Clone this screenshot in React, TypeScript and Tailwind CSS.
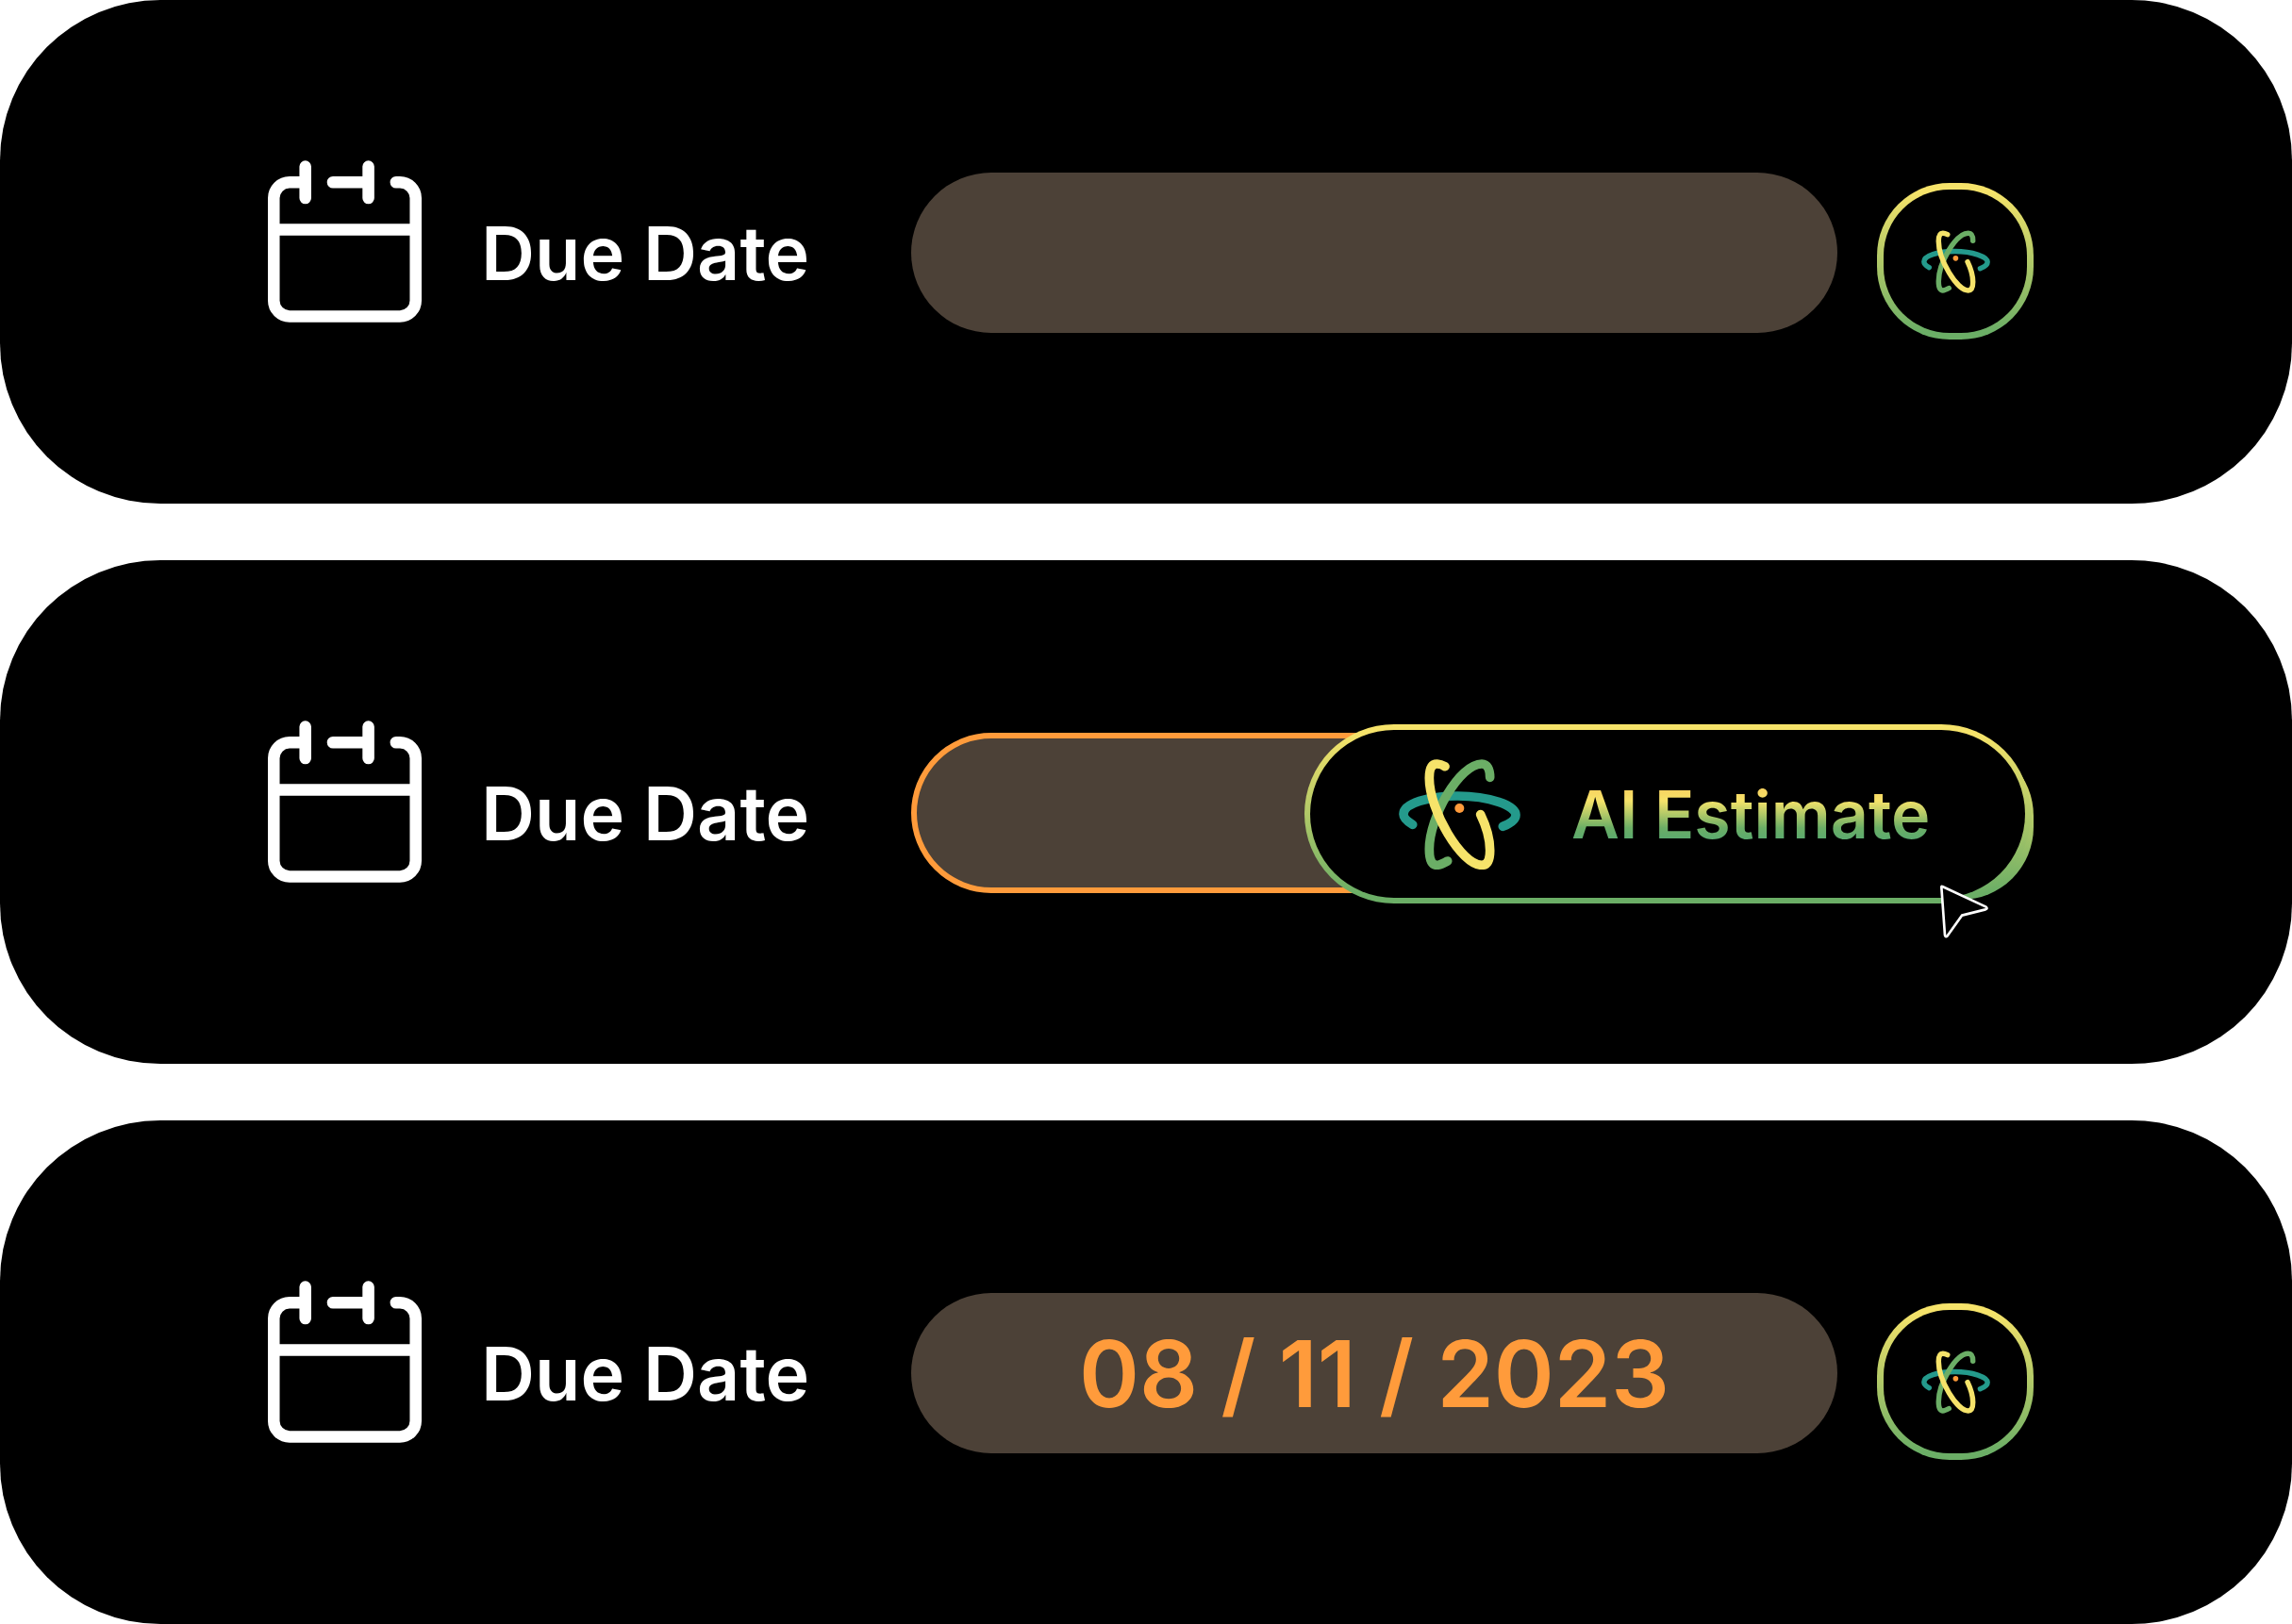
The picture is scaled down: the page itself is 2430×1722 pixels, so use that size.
import { useState } from "react";

function CalendarIcon() {
  return (
    <svg
      viewBox="2.25 1.25 19.5 20.5"
      className="mb-6 h-[172px] w-[163px] shrink-0"
      fill="none"
      stroke="white"
      strokeWidth="1.5"
      strokeLinecap="round"
      aria-hidden="true"
    >
      <path d="M7 4H5a2 2 0 0 0-2 2v13a2 2 0 0 0 2 2h14a2 2 0 0 0 2-2V6a2 2 0 0 0-2-2h-.5" />
      <path d="M10.5 4H15M7 2v4M15 2v4M3 10h18" />
    </svg>
  );
}

function AtomIcon({ className }: { className: string }) {
  return (
    <svg
      viewBox="71 72 387 351"
      className={className}
      fill="none"
      strokeWidth="29"
      strokeLinecap="round"
      aria-hidden="true"
    >
      <path
        stroke="#249a8c"
        d="M115 280C98 270 86 260 86 247C86 213 165 189 258 189C360 189 443 220 443 249C443 264 428 276 402 286"
      />
      <path
        stroke="#6bae66"
        d="M226 396C214 403 203 409 192 409C175 409 168 390 168 358C168 255 265 87 335 87C353 87 361 105 361 130"
      />
      <path
        stroke="#f6e36a"
        d="M218 95C209 90 200 87 192 87C175 87 168 103 168 132C168 235 270 409 335 409C353 409 361 392 361 362C361 325 349 285 331 248"
      />
      <circle cx="264" cy="228" r="15" fill="#ff9b3b" />
    </svg>
  );
}

function PointerIcon() {
  return (
    <svg
      viewBox="229 563 156 171"
      className="pointer-events-none absolute right-12 top-[174px] h-[57px] w-[52px]"
      fill="black"
      stroke="white"
      strokeWidth="8"
      strokeLinejoin="round"
      aria-hidden="true"
    >
      <path d="M239 569Q236 567 236 571L247 724Q249 731 254 727L301 661L376 642Q384 639 378 634Z" />
    </svg>
  );
}

type RowProps = { id: string; initial?: string; hovered?: boolean };

function DueDateRow({ id, initial = "", hovered = false }: RowProps) {
  const [value, setValue] = useState(initial);
  return (
    <section className="flex items-center rounded-[170px] bg-black pb-[168px] pl-[284px] pr-[274px] pt-[170px]">
      <CalendarIcon />
      <label
        htmlFor={id}
        className="ml-[63px] w-[456px] shrink-0 whitespace-nowrap text-[79px] font-semibold leading-none text-white"
      >
        Due Date
      </label>
      <div className="relative flex min-w-0 flex-1 items-center gap-[42px] self-stretch">
        <input
          id={id}
          type="text"
          value={value}
          onChange={(e) => setValue(e.target.value)}
          className={
            hovered
              ? "h-[170px] min-w-0 flex-1 rounded-full border-[6px] border-[#ff9b3b] bg-[#4c4137] text-center text-[97px] font-semibold text-[#ff9b3b] outline-none"
              : "h-[170px] min-w-0 flex-1 rounded-full bg-[#4c4137] text-center text-[97px] font-semibold text-[#ff9b3b] outline-none"
          }
        />
        <button
          type="button"
          aria-label="Estimate due date with AI"
          className={
            hovered
              ? "mt-[18px] size-[166px] shrink-0 rounded-[77px] bg-[linear-gradient(#f6e36a_5%,#6bae66_95%)]"
              : "mt-[18px] flex size-[166px] shrink-0 items-center justify-center rounded-[77px] border-[7px] border-transparent [background:linear-gradient(#000,#000)_padding-box,linear-gradient(#f6e36a_5%,#6bae66_95%)_border-box]"
          }
        >
          {!hovered && <AtomIcon className="h-[67px] w-[73px]" />}
        </button>
        {hovered && (
          <>
            <button
              type="button"
              className="absolute right-[3px] top-1 flex h-[190px] w-[770px] items-center gap-[54px] rounded-full border-[6px] border-transparent pl-[94px] [background:linear-gradient(#000,#000)_padding-box,linear-gradient(#f6e36a_5%,#6bae66_95%)_border-box]"
            >
              <AtomIcon className="h-[117px] w-[129px] shrink-0" />
              <span className="whitespace-nowrap bg-[linear-gradient(#ff9b3b_-30%,#f6e36a_33%,#6bae66_67%,#249a8c_130%)] bg-clip-text text-[70px] font-semibold leading-[85px] text-transparent">
                AI Estimate
              </span>
            </button>
            <PointerIcon />
          </>
        )}
      </div>
    </section>
  );
}

export default function App() {
  return (
    <main className="flex flex-col gap-[60px] bg-white font-['Inter',sans-serif]">
      <DueDateRow id="due-date-empty" />
      <DueDateRow id="due-date-hover" hovered />
      <DueDateRow id="due-date-filled" initial="08 / 11 / 2023" />
    </main>
  );
}
